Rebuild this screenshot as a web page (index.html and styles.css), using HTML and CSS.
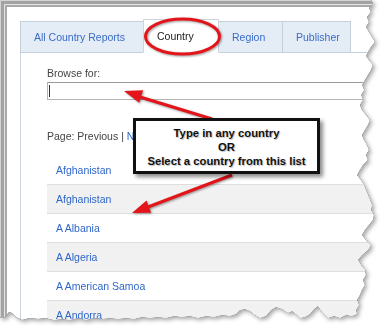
FILE: index.html
```html
<!DOCTYPE html>
<html lang="en">
<head>
    <meta charset="UTF-8">
    <title>Browse by Country</title>
    <link rel="stylesheet" href="styles.css">
</head>
<body>
    <div class="sheet-shadow">
        <div class="sheet">
            <div class="frame">
                <div class="tabs">
                    <div class="tab tab-all">All Country Reports</div>
                    <div class="tab tab-country active">Country</div>
                    <div class="tab tab-region">Region</div>
                    <div class="tab tab-publisher">Publisher</div>
                </div>

                <div class="panel">
                    <div class="browse-label">Browse for:</div>
                    <div class="search-box"><span class="caret"></span></div>

                    <div class="pager">
                        Page: Previous | <a class="link" href="#">Next</a>
                    </div>

                    <ul class="country-list">
                        <li class="row"><a class="link" href="#">Afghanistan</a></li>
                        <li class="row"><a class="link" href="#">Afghanistan</a></li>
                        <li class="row"><a class="link" href="#">A Albania</a></li>
                        <li class="row"><a class="link" href="#">A Algeria</a></li>
                        <li class="row"><a class="link" href="#">A American Samoa</a></li>
                        <li class="row"><a class="link" href="#">A Andorra</a></li>
                    </ul>
                </div>
            </div>
        </div>
    </div>

    <!-- annotations drawn over the screenshot -->
    <svg class="marks" width="384" height="331" viewBox="0 0 384 331">
        <ellipse cx="182.5" cy="36.5" rx="37" ry="17.5" fill="none" stroke="#e3141a" stroke-width="3"/>
        <line x1="212" y1="119" x2="140" y2="97" stroke="#e3141a" stroke-width="3.2"/>
        <polygon points="124,91 143.1,90.3 139.2,102.7" fill="#e3141a"/>
        <line x1="232" y1="175" x2="148" y2="207" stroke="#e3141a" stroke-width="3.2"/>
        <polygon points="132,213 146.5,200.5 151.1,212.7" fill="#e3141a"/>
    </svg>

    <div class="callout">
        Type in any country<br>
        OR<br>
        Select a country from this list
    </div>
</body>
</html>
```

FILE: styles.css
```css
body {
    margin: 0;
    background: #fff;
    font-family: 'Liberation Sans', Arial, sans-serif;
    font-size: 10.5px;
    color: #444;
}

.sheet-shadow {
    width: 384px;
    height: 331px;
    filter: drop-shadow(0 0 0.6px rgba(0, 0, 0, 0.9)) drop-shadow(2px 2px 2px rgba(0, 0, 0, 0.35));
}
.sheet {
    width: 384px;
    height: 331px;
    background: #fff;
    overflow: hidden;
    clip-path: polygon(
        0 0, 371px 0, 373px 4px, 369px 8px, 371px 12px, 367px 17px, 369px 22px, 366px 27px,
        369px 32px, 372px 37px, 375px 42px, 371px 47px, 368px 52px, 366px 56px, 369px 60px,
        373px 65px, 371px 70px, 368px 75px, 365px 80px, 362px 85px, 364px 90px, 361px 95px,
        363px 100px, 360px 105px, 362px 110px, 366px 115px, 370px 120px, 368px 125px,
        365px 130px, 362px 135px, 364px 140px, 367px 145px, 369px 150px, 366px 155px,
        368px 160px, 363px 165px, 360px 170px, 357px 175px, 361px 180px, 364px 185px,
        366px 190px, 368px 195px, 370px 200px, 372px 205px, 371px 210px, 374px 215px,
        373px 220px, 369px 225px, 365px 230px, 362px 235px, 366px 240px, 371px 245px,
        368px 250px, 362px 255px, 358px 260px, 361px 265px, 365px 270px, 366px 275px,
        363px 280px, 365px 285px, 362px 290px, 360px 295px, 357px 300px, 359px 305px,
        356px 310px, 357px 314px,
        352px 316px, 346px 315px, 340px 318px, 334px 316px, 328px 318px, 322px 312px,
        318px 306px, 314px 309px, 310px 314px, 305px 317px, 300px 318px, 296px 314px,
        292px 311px, 288px 313px, 282px 309px, 276px 307px, 271px 310px, 266px 316px,
        260px 318px, 255px 315px, 250px 311px, 245px 309px, 240px 310px, 236px 314px,
        230px 316px, 222px 315px, 214px 317px, 206px 316px, 198px 318px, 190px 316px,
        182px 317px, 174px 316px, 166px 318px, 158px 317px, 150px 318px, 142px 317px,
        134px 319px, 126px 318px, 118px 319px, 110px 318px, 102px 319px, 94px 318px,
        86px 320px, 78px 318px, 70px 320px, 62px 319px, 54px 320px, 46px 318px,
        38px 319px, 30px 318px, 22px 320px, 16px 317px, 12px 313px, 9px 312px,
        6px 316px, 3px 318px, 0 317px
    );
}

/* window chrome, only top and left edges are visible */
.frame {
    height: 100%;
    box-sizing: border-box;
    padding: 7px 0 0 7px;
    box-shadow:
        inset 1px 1px 0 #d4d4d4,
        inset 4px 4px 0 #a3a3a3,
        inset 5px 5px 0 #e4e4e4,
        inset 7px 7px 0 #a9a9a9;
}

.tabs {
    display: flex;
    align-items: flex-end;
    margin: 12px 0 -1px 13px;
    position: relative;
    z-index: 1;
}
.tab {
    box-sizing: border-box;
    height: 32px;
    line-height: 30px;
    padding-left: 13px;
    border: 1px solid #c6d0dc;
    background: #e4ecf6;
    color: #3a6cc9;
    white-space: nowrap;
}
.tab + .tab {
    margin-left: -1px;
}
.tab.active {
    height: 34px;
    line-height: 32px;
    background: #fff;
    color: #1a1a1a;
    border-color: #cfd5dc;
    border-bottom-color: #fff;
    position: relative;
    z-index: 1;
}
.tab-all { width: 124px; }
.tab-country { width: 76px; }
.tab-region { width: 65px; }
.tab-publisher { width: 69px; }

.panel {
    margin-left: 13px;
    height: 400px;
    padding: 13px 0 0 26px;
    border-top: 1px solid #c6d0dc;
    border-left: 1px solid #cdd5de;
}

.browse-label {
    line-height: 14px;
    color: #444;
}

.search-box {
    box-sizing: border-box;
    margin-top: 2px;
    height: 18px;
    border: 1px solid #b4b4b4;
    border-top-color: #999;
    background: #fff;
    padding: 2px 0 0 1px;
}
.caret {
    display: block;
    width: 1px;
    height: 12px;
    background: #333;
}

.pager {
    margin-top: 29px;
    line-height: 14px;
    color: #444;
}

.link {
    color: #2f66c9;
    text-decoration: none;
}

.country-list {
    list-style: none;
    margin: 12px 0 0;
    padding: 0;
}
.row {
    box-sizing: border-box;
    height: 29px;
    display: flex;
    align-items: center;
    padding-left: 9px;
    border-top: 1px solid #dedede;
}
.row:first-child {
    border-top: none;
}
.row:nth-child(even) {
    background: #f1f1f1;
}

.marks {
    position: absolute;
    left: 0;
    top: 0;
    pointer-events: none;
    filter: drop-shadow(1.5px 1.5px 1px rgba(0, 0, 0, 0.4));
}

.callout {
    position: absolute;
    left: 133px;
    top: 118px;
    box-sizing: border-box;
    width: 187px;
    height: 56px;
    padding-top: 5px;
    border: 3px solid #111;
    background: #fff;
    box-shadow: 3px 3px 4px rgba(0, 0, 0, 0.45);
    font-weight: bold;
    font-size: 11.3px;
    line-height: 14px;
    color: #111;
    text-align: center;
    text-shadow: 1px 1px 1px rgba(0, 0, 0, 0.25);
}
```
